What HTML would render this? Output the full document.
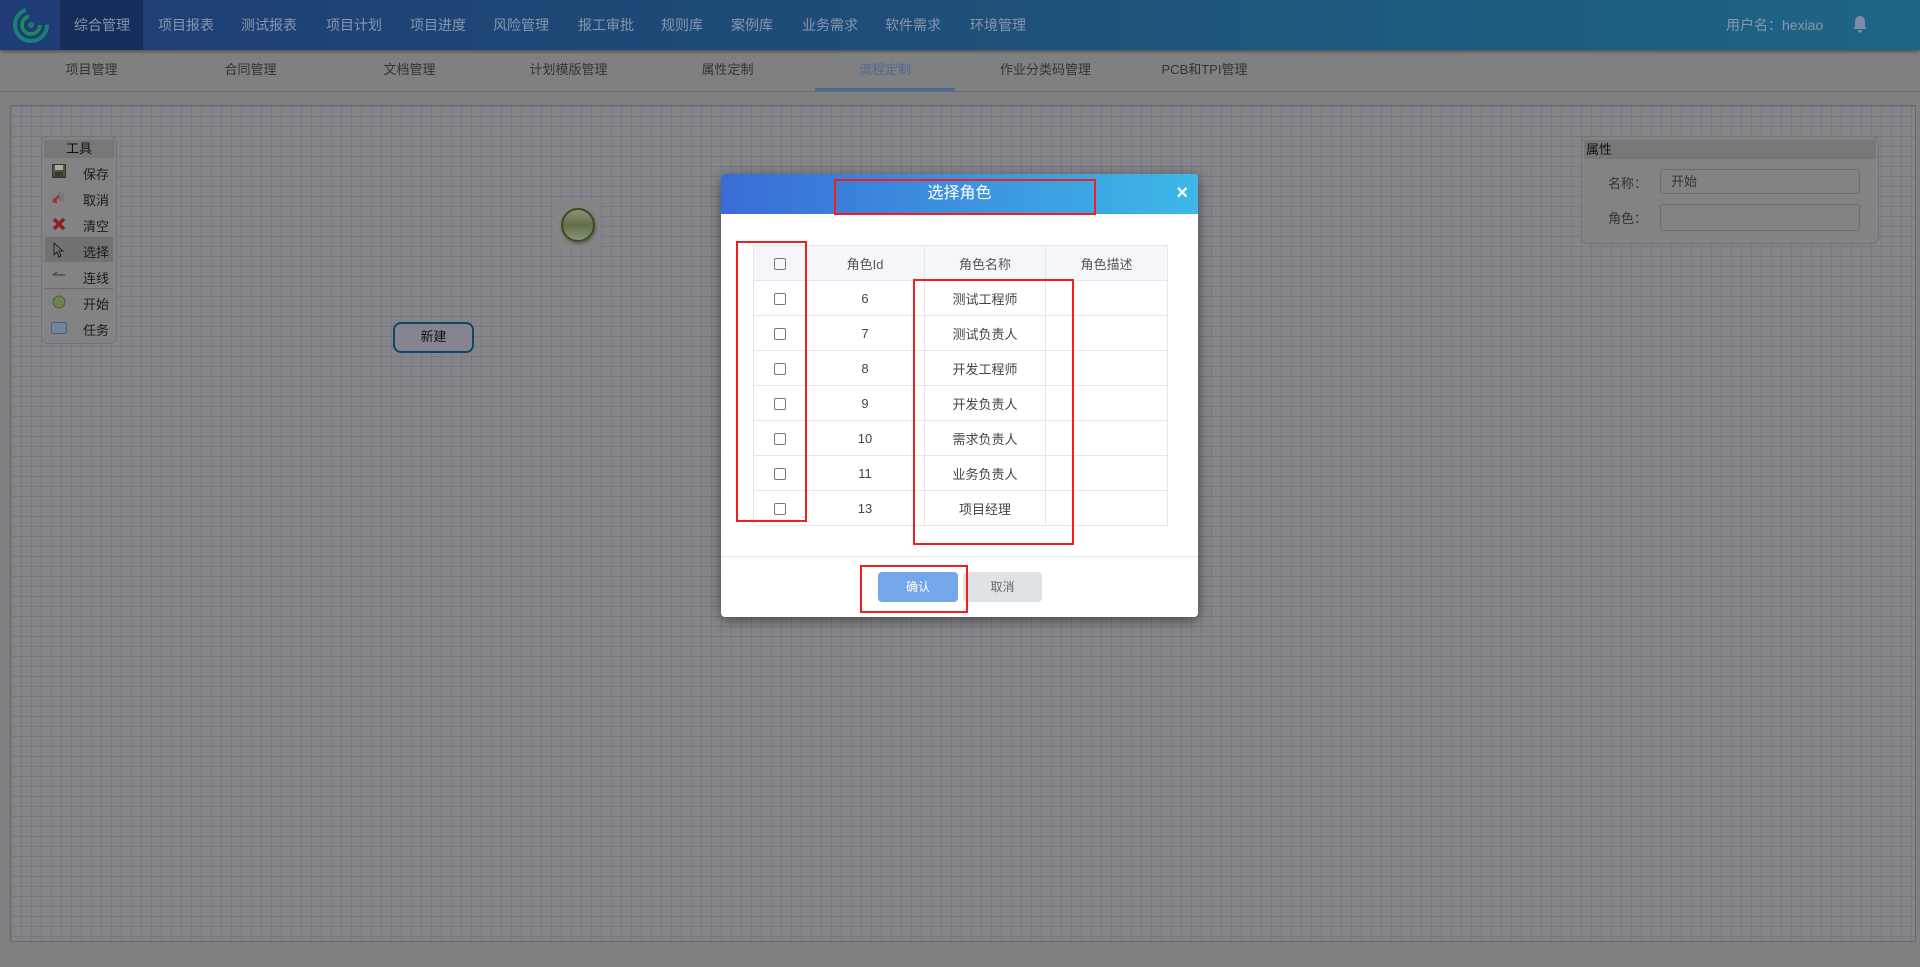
<!DOCTYPE html>
<html><head><meta charset="utf-8"><style>
*{margin:0;padding:0;box-sizing:border-box}
body{width:1920px;height:967px;overflow:hidden;background:#808080;font-family:"Liberation Sans","Noto Sans CJK SC",sans-serif;position:relative}
.top{position:absolute;left:0;top:0;width:1920px;height:50px;background:linear-gradient(90deg,#1f3c74,#1e4f78 50%,#1e6585);box-shadow:0 2px 3px rgba(0,0,0,.35)}
.nav div{position:absolute;top:0;line-height:50px;color:#8796ad;font-size:14px;white-space:nowrap}
.sub{position:absolute;left:0;top:50px;width:1920px;height:42px;border-bottom:1px solid #6c6c6c}
.sub div{position:absolute;top:0;width:159px;line-height:40px;text-align:center;font-size:13px;color:#333}
.grid{position:absolute;left:10px;top:105px;width:1906px;height:837px;border:1px solid #6a6a6a;background-color:#858587;
background-image:linear-gradient(90deg,#77768a 1px,transparent 1px),linear-gradient(#77768a 1px,transparent 1px);background-size:10px 10px}
.panel{position:absolute;background:#838386;border:1px solid #737373;border-radius:7px}
.ph{position:absolute;background:#777;font-size:13px;color:#111}
.ti{position:absolute;left:83px;font-size:13px;color:#1a1a1a}
.modal{position:absolute;left:721px;top:174px;width:477px;height:443px;background:#fff;border-radius:4px;box-shadow:0 3px 12px rgba(0,0,0,.45);overflow:hidden}
.mh{height:40px;background:linear-gradient(90deg,#3a6cd6,#3db8e8);color:#fff;font-size:16px;text-align:center;line-height:40px}
table{position:absolute;left:32px;top:71px;width:415px;border-collapse:collapse;font-size:13px;color:#444}
td{border:1px solid #e4e7eb;height:35px;text-align:center}
tr.h td{background:#f5f6f9;color:#555}
.cb{display:inline-block;width:12px;height:12px;border:1px solid #777;border-radius:2px;vertical-align:middle}
.rb{position:absolute;border:2.5px solid #f21e1e}
</style></head><body>
<div class="top">
<svg style="position:absolute;left:12px;top:6px" width="38" height="38" viewBox="0 0 38 38"><circle cx="19" cy="19" r="16" fill="none" stroke="#1a7f7a" stroke-width="4" stroke-dasharray="70 30"/><circle cx="19" cy="19" r="9" fill="none" stroke="#1f8a5a" stroke-width="3.5" stroke-dasharray="40 17"/><circle cx="19" cy="19" r="3" fill="#217a70"/></svg>
<div style="position:absolute;left:60px;top:0;width:83px;height:50px;background:#162e59"></div>
<div class="nav"><div style="left:74px">综合管理</div><div style="left:158px">项目报表</div><div style="left:241px">测试报表</div><div style="left:326px">项目计划</div><div style="left:410px">项目进度</div><div style="left:493px">风险管理</div><div style="left:578px">报工审批</div><div style="left:661px">规则库</div><div style="left:731px">案例库</div><div style="left:802px">业务需求</div><div style="left:885px">软件需求</div><div style="left:970px">环境管理</div></div>
<div style="position:absolute;left:1726px;top:0;line-height:50px;font-size:14px;color:#8796ad">用户名：hexiao</div>
<svg style="position:absolute;left:1852px;top:15px" width="16" height="19" viewBox="0 0 16 19"><path d="M8 1c-3 0-5 2.5-5 5.5v5L1 14h14l-2-2.5v-5C13 3.5 11 1 8 1z" fill="#7d8da3"/><rect x="6" y="15" width="4" height="2.5" rx="1.2" fill="#7d8da3"/></svg>
</div>
<div class="sub">
<div style="left:12px">项目管理</div><div style="left:171px">合同管理</div><div style="left:330px">文档管理</div><div style="left:489px">计划模版管理</div><div style="left:648px">属性定制</div><div style="left:815px;width:140px;color:#4a6a98;border-bottom:3px solid #4a6a98;height:41px">流程定制</div><div style="left:966px">作业分类码管理</div><div style="left:1125px">PCB和TPI管理</div>
</div>
<div class="grid"></div>
<div class="panel" style="left:41px;top:136px;width:76px;height:208px"></div>
<div class="ph" style="left:44px;top:140px;width:70px;height:18px;text-align:center;line-height:18px">工具</div>
<div style="position:absolute;left:45px;top:237px;width:68px;height:25px;background:#727272"></div>
<div style="position:absolute;left:45px;top:288px;width:68px;height:1px;background:#6a6a6a"></div>
<svg style="position:absolute;left:52px;top:164px" width="14" height="14"><rect x="0.5" y="0.5" width="13" height="13" fill="#4d5a30" stroke="#333"/><rect x="3" y="1" width="8" height="5" fill="#aaa"/><rect x="3" y="8" width="8" height="5" fill="#3a3a3a"/></svg>
<svg style="position:absolute;left:52px;top:190px" width="14" height="14"><path d="M6 1l6 3v9l-6-3z" fill="#777"/><path d="M1 11l6-5M1 11l4 1" stroke="#a03030" stroke-width="2.5"/></svg>
<svg style="position:absolute;left:52px;top:217px" width="14" height="14"><path d="M2 2l10 10M12 2L2 12" stroke="#8a2020" stroke-width="3.5"/></svg>
<svg style="position:absolute;left:53px;top:242px" width="12" height="16"><path d="M1 1v12l3-3 2 5 2-1-2-5h4z" fill="none" stroke="#222" stroke-width="1"/></svg>
<svg style="position:absolute;left:52px;top:270px" width="14" height="10"><path d="M1 5h12M1 5l4-3" stroke="#444" stroke-width="1.2" fill="none"/></svg>
<svg style="position:absolute;left:52px;top:295px" width="14" height="14"><circle cx="7" cy="7" r="6" fill="#6f8150" stroke="#505a40"/></svg>
<svg style="position:absolute;left:51px;top:322px" width="16" height="12"><rect x="0.5" y="0.5" width="15" height="11" rx="2" fill="#6f8598" stroke="#4e6070"/></svg>
<div class="ti" style="top:164px">保存</div><div class="ti" style="top:190px">取消</div><div class="ti" style="top:216px">清空</div><div class="ti" style="top:242px">选择</div><div class="ti" style="top:268px">连线</div><div class="ti" style="top:294px">开始</div><div class="ti" style="top:320px">任务</div>
<div style="position:absolute;left:555px;top:202px;width:46px;height:46px;background:#858585"></div>
<div style="position:absolute;left:561px;top:208px;width:34px;height:34px;border-radius:50%;border:2px solid #3e4a22;background:linear-gradient(#8a9478,#5f7048 50%,#8a9478);box-shadow:1px 2px 3px rgba(0,0,0,.3)"></div>
<div style="position:absolute;left:393px;top:322px;width:81px;height:31px;border:2.5px solid #0c4866;border-radius:8px;background:#858490;text-align:center;line-height:26px;font-size:13px;color:#111">新建</div>
<div class="panel" style="left:1581px;top:136px;width:298px;height:108px"></div>
<div class="ph" style="left:1584px;top:140px;width:292px;height:19px;line-height:19px;padding-left:2px">属性</div>
<div style="position:absolute;left:1608px;top:173px;font-size:13px;color:#333">名称：</div>
<div style="position:absolute;left:1660px;top:169px;width:200px;height:25px;border:1px solid #6d6d6d;border-radius:3px;font-size:13px;color:#333;line-height:23px;padding-left:10px">开始</div>
<div style="position:absolute;left:1608px;top:208px;font-size:13px;color:#333">角色：</div>
<div style="position:absolute;left:1660px;top:204px;width:200px;height:27px;border:1px solid #6d6d6d;border-radius:3px"></div>

<div class="modal">
<div class="mh">选择角色</div>
<div style="position:absolute;right:10px;top:8px;color:#fff;font-size:20px;font-weight:bold">×</div>
<table>
<tr class="h"><td style="width:52px"><span class="cb"></span></td><td style="width:119px">角色Id</td><td style="width:121px">角色名称</td><td>角色描述</td></tr>
<tr><td><span class="cb"></span></td><td>6</td><td>测试工程师</td><td></td></tr>
<tr><td><span class="cb"></span></td><td>7</td><td>测试负责人</td><td></td></tr>
<tr><td><span class="cb"></span></td><td>8</td><td>开发工程师</td><td></td></tr>
<tr><td><span class="cb"></span></td><td>9</td><td>开发负责人</td><td></td></tr>
<tr><td><span class="cb"></span></td><td>10</td><td>需求负责人</td><td></td></tr>
<tr><td><span class="cb"></span></td><td>11</td><td>业务负责人</td><td></td></tr>
<tr><td><span class="cb"></span></td><td>13</td><td>项目经理</td><td></td></tr>
</table>
<div style="position:absolute;left:0;top:382px;width:477px;height:1px;background:#e5e5e5"></div>
<div style="position:absolute;left:157px;top:398px;width:80px;height:30px;background:#74a7ea;border-radius:4px;color:#fff;font-size:12px;text-align:center;line-height:30px">确认</div>
<div style="position:absolute;left:242px;top:398px;width:79px;height:30px;background:#e0e3e5;border-radius:4px;color:#666;font-size:12px;text-align:center;line-height:30px">取消</div>
</div>
<div class="rb" style="left:834px;top:179px;width:262px;height:36px"></div>
<div class="rb" style="left:736px;top:241px;width:71px;height:281px"></div>
<div class="rb" style="left:913px;top:279px;width:161px;height:266px"></div>
<div class="rb" style="left:860px;top:565px;width:108px;height:48px"></div>
</body></html>
